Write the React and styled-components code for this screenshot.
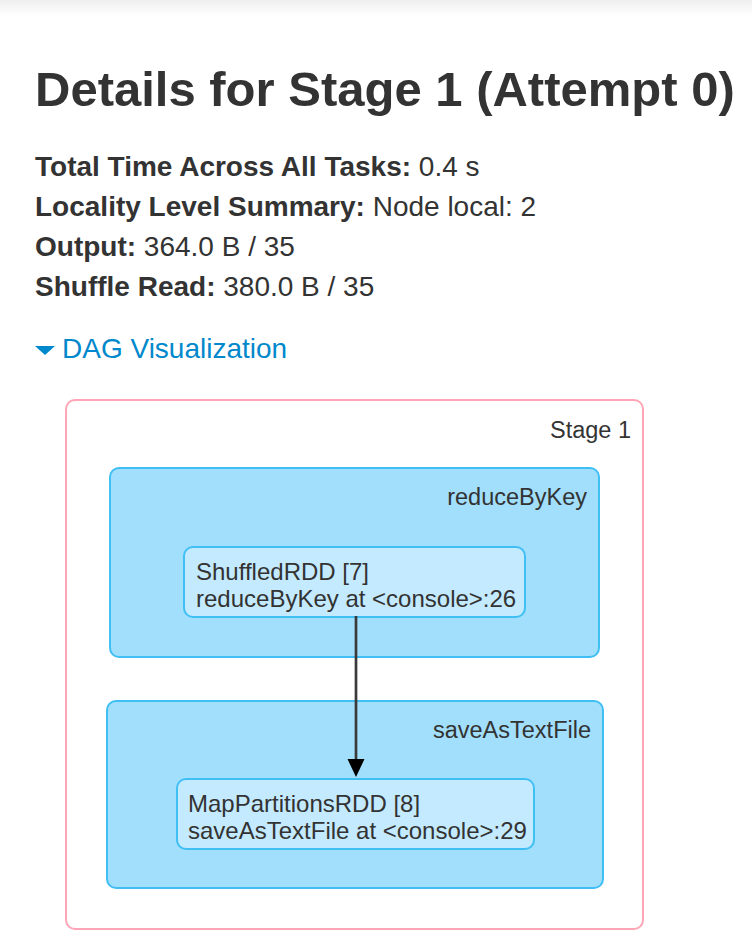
import React from "react";
import styled, { createGlobalStyle } from "styled-components";

const GlobalStyle = createGlobalStyle`
  html, body {
    margin: 0;
    padding: 0;
    background: #ffffff;
  }
  body {
    font-family: "Liberation Sans", Helvetica, Arial, sans-serif;
    color: #333333;
  }
  * { box-sizing: border-box; }
`;

const TopShade = styled.div`
  height: 16px;
  background: linear-gradient(#efefef, #ffffff);
`;

const Page = styled.div`
  padding: 0 35px;
`;

const Title = styled.h3`
  margin: 46px 0 0;
  font-size: 49px;
  line-height: 54px;
  font-weight: 700;
  color: #333333;
  white-space: nowrap;
`;

const Summary = styled.ul`
  list-style: none;
  margin: 31px 0 0;
  padding: 0;
  font-size: 28px;
  line-height: 40px;
`;

const Item = styled.li`
  white-space: nowrap;
  strong {
    font-weight: 700;
  }
`;

const Toggle = styled.a`
  display: flex;
  align-items: center;
  gap: 7px;
  margin-top: 22px;
  font-size: 28px;
  line-height: 40px;
  color: #0088cc;
  text-decoration: none;
  cursor: pointer;
`;

const OpenArrow = styled.span`
  width: 0;
  height: 0;
  margin-top: 2px;
  border-left: 10px solid transparent;
  border-right: 10px solid transparent;
  border-top: 9px solid #0088cc;
`;

const DagBox = styled.div`
  position: relative;
  margin: 30px 0 0 30px;
  width: 579px;
  height: 531px;
  border: 2px solid #ffa5b5;
  border-radius: 10px;
  padding: 15px 11px 0 0;
`;

const Label = styled.div`
  text-align: right;
  font-size: ${(p) => p.$size || 23.5}px;
  line-height: 28px;
  color: #333333;
  white-space: nowrap;
`;

const Cluster = styled.div`
  margin-left: ${(p) => p.$left}px;
  margin-top: ${(p) => p.$top}px;
  width: ${(p) => p.$width}px;
  height: ${(p) => p.$height}px;
  background: #a1dffc;
  border: 2px solid #40bff5;
  border-radius: 10px;
  padding: ${(p) => p.$padTop}px 11px 0 0;
`;

const RddNode = styled.div`
  margin-left: ${(p) => p.$left}px;
  margin-top: ${(p) => p.$top}px;
  width: ${(p) => p.$width}px;
  height: 72px;
  background: #c4eaff;
  border: 2px solid #40bff5;
  border-radius: 10px;
  padding: 10px 0 0 ${(p) => p.$pad}px;
  font-size: 24px;
  line-height: 27px;
  color: #333333;
  white-space: nowrap;
`;

const Edge = styled.svg`
  position: absolute;
  left: 280px;
  top: 215px;
  overflow: visible;
`;

export default function App() {
  return (
    <>
      <GlobalStyle />
      <TopShade />
      <Page>
        <Title>Details for Stage 1 (Attempt 0)</Title>
        <Summary>
          <Item>
            <strong>Total Time Across All Tasks:</strong> 0.4 s
          </Item>
          <Item>
            <strong>Locality Level Summary:</strong> Node local: 2
          </Item>
          <Item>
            <strong>Output:</strong> 364.0 B / 35
          </Item>
          <Item>
            <strong>Shuffle Read:</strong> 380.0 B / 35
          </Item>
        </Summary>
        <Toggle>
          <OpenArrow />
          DAG Visualization
        </Toggle>
        <DagBox>
          <Label $size={23.5}>Stage 1</Label>
          <Cluster $left={42} $top={23} $width={491} $height={191} $padTop={14}>
            <Label>reduceByKey</Label>
            <RddNode $left={72} $top={35} $width={343} $pad={11}>
              ShuffledRDD [7]
              <br />
              reduceByKey at &lt;console&gt;:26
            </RddNode>
          </Cluster>
          <Cluster $left={39} $top={42} $width={498} $height={189} $padTop={14}>
            <Label>saveAsTextFile</Label>
            <RddNode $left={68} $top={34} $width={359} $pad={10}>
              MapPartitionsRDD [8]
              <br />
              saveAsTextFile at &lt;console&gt;:29
            </RddNode>
          </Cluster>
          <Edge width="20" height="164" viewBox="0 0 20 164">
            <line x1="9" y1="0" x2="9" y2="146" stroke="#3a3a3a" strokeWidth="2.7" />
            <polygon points="0.5,143 17.5,143 9,161" fill="#000000" />
          </Edge>
        </DagBox>
      </Page>
    </>
  );
}
